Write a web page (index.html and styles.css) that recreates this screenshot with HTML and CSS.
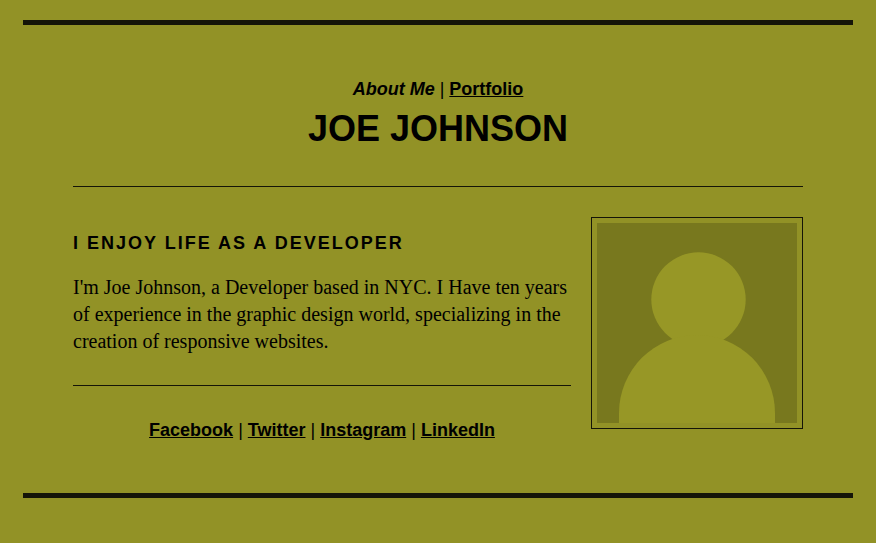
FILE: index.html
```html
<!DOCTYPE html>
<html lang="en">
<head>
<meta charset="utf-8">
<meta name="viewport" content="width=device-width, initial-scale=1">
<title>Joe Johnson</title>
<link rel="stylesheet" href="styles.css">
</head>
<body>
<div class="page">
  <header class="header">
    <nav class="links"><em>About Me</em> | <a href="#portfolio">Portfolio</a></nav>
    <h1 class="name">JOE JOHNSON</h1>
  </header>
  <main class="content">
    <div class="about">
      <section class="bio">
        <h2 class="tagline">I ENJOY LIFE AS A DEVELOPER</h2>
        <p class="intro">I'm Joe Johnson, a Developer based in NYC. I Have ten years of experience in the graphic design world, specializing in the creation of responsive websites.</p>
      </section>
      <nav class="links social"><a href="#facebook">Facebook</a> | <a href="#twitter">Twitter</a> | <a href="#instagram">Instagram</a> | <a href="#linkedin">LinkedIn</a></nav>
    </div>
    <svg class="photo" viewBox="0 0 200 200" role="img" aria-label="Portrait">
      <rect width="200" height="200" fill="#78781e"/>
      <circle cx="101.5" cy="76.5" r="47.2" fill="#979726"/>
      <path d="M22 200V190A78 78 0 0 1 178 190V200Z" fill="#979726"/>
    </svg>
  </main>
</div>
</body>
</html>
```
FILE: styles.css
```css
* {
  box-sizing: border-box;
}

body {
  margin: 0;
  padding: 20px 23px;
  background: #929226;
  color: #000;
  font-family: "Liberation Sans", Arial, sans-serif;
  font-size: 18px;
  line-height: 29px;
}

.page {
  max-width: 830px;
  margin: 0 auto;
  padding: 50px 50px 48px;
  border-top: 5px solid #151508;
  border-bottom: 5px solid #151508;
}

.header {
  padding-bottom: 32px;
  border-bottom: 1px solid #151508;
  text-align: center;
}

.links em,
.links a {
  color: #000;
  font-weight: bold;
}

.name {
  margin: 0;
  font-size: 36px;
  line-height: 50px;
}

.content {
  display: flex;
  align-items: flex-start;
  gap: 20px;
  padding-top: 30px;
}

.about {
  flex: 1;
  min-width: 0;
}

.bio {
  padding: 12px 0 30px;
  border-bottom: 1px solid #151508;
}

.tagline {
  margin: 0 0 16px;
  font-size: 18px;
  letter-spacing: 2px;
}

.intro {
  margin: 0;
  font-family: Georgia, "Liberation Serif", serif;
  font-size: 20px;
  line-height: 27px;
}

.social {
  padding-top: 30px;
  text-align: center;
}

.photo {
  flex: none;
  width: 212px;
  height: 212px;
  padding: 5px;
  border: 1px solid #151508;
}
```
